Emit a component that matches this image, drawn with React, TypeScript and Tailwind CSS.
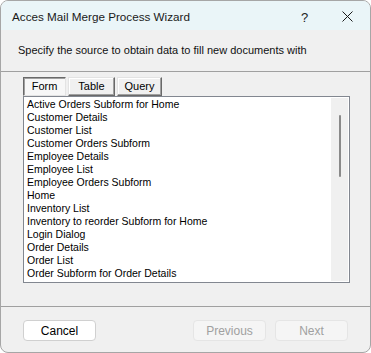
import React from "react";

const items = [
  "Active Orders Subform for Home",
  "Customer Details",
  "Customer List",
  "Customer Orders Subform",
  "Employee Details",
  "Employee List",
  "Employee Orders Subform",
  "Home",
  "Inventory List",
  "Inventory to reorder Subform for Home",
  "Login Dialog",
  "Order Details",
  "Order List",
  "Order Subform for Order Details",
];

export default function App() {
  return (
    <div className="w-[371px] h-[353px] bg-white">
      <div
        className="w-[371px] h-[353px] flex flex-col border border-[#a6a6a6] rounded-[8px] overflow-hidden bg-[#f0f0f0] text-black"
        style={{ fontFamily: '"Liberation Sans", Arial, sans-serif' }}
      >
        {/* title bar */}
        <div className="h-[29px] shrink-0 bg-[#eaf5f8] flex items-center pl-[11px] pt-[3px] relative">
          <span className="text-[11.7px] text-[#1a1a1a]">Acces Mail Merge Process Wizard</span>
          <span className="absolute left-[300px] top-[7px] text-[13px] text-[#222]">?</span>
          <svg className="absolute left-[341px] top-[10px]" width="11" height="11" viewBox="0 0 11 11">
            <path d="M0.5 0.5 L10.5 10.5 M10.5 0.5 L0.5 10.5" stroke="#1a1a1a" strokeWidth="1" />
          </svg>
        </div>
        {/* header */}
        <div className="h-[42px] shrink-0 border-b border-[#a0a0a0] pl-[17px] pt-[7px]">
          <span className="text-[11px] text-[#111]">Specify the source to obtain data to fill new documents with</span>
        </div>
        {/* content */}
        <div className="h-[235px] shrink-0 border-b border-[#a0a0a0] pl-[22px] pt-[5px]">
          <div className="flex gap-[2px] h-[19px]">
            <div className="w-[43px] h-[19px] flex items-center justify-center text-[11px] bg-[#f7f7f7] border border-t-[#696969] border-l-[#696969] border-r-[#e3e3e3] border-b-[#e3e3e3] shadow-[inset_1px_1px_0_#a0a0a0]">
              Form
            </div>
            <div className="w-[47px] h-[19px] flex items-center justify-center text-[11px] bg-[#f0f0f0] border border-t-[#e3e3e3] border-l-[#e3e3e3] border-r-[#696969] border-b-[#696969] shadow-[inset_-1px_-1px_0_#a0a0a0,inset_1px_1px_0_#ffffff]">
              Table
            </div>
            <div className="w-[45px] h-[19px] flex items-center justify-center text-[11px] bg-[#f0f0f0] border border-t-[#e3e3e3] border-l-[#e3e3e3] border-r-[#696969] border-b-[#696969] shadow-[inset_-1px_-1px_0_#a0a0a0,inset_1px_1px_0_#ffffff]">
              Query
            </div>
          </div>
          <div className="w-[327px] h-[187px] border border-[#828790] bg-white flex">
            <div className="flex-1 pt-[1px] pl-[3px]">
              {items.map((t) => (
                <div key={t} className="h-[13px] leading-[13px] text-[10.5px] text-[#000] whitespace-nowrap">
                  {t}
                </div>
              ))}
            </div>
            <div className="w-[17px] bg-[#f0f0f0] mt-[1px] mb-[1px] mr-[1px] flex justify-center pt-[17px]">
              <div className="w-[2px] h-[62px] bg-[#8a8a8a] rounded-full" />
            </div>
          </div>
        </div>
        {/* footer */}
        <div className="flex-1 relative">
          <button className="absolute left-[22px] top-[13px] w-[73px] h-[21px] bg-white border border-[#d0d0d0] rounded-[4px] text-[12px] text-black flex items-center justify-center">
            Cancel
          </button>
          <button className="absolute left-[192px] top-[13px] w-[73px] h-[21px] bg-[#f5f5f5] border border-[#e5e5e5] rounded-[4px] text-[12px] text-[#a0a0a0] flex items-center justify-center">
            Previous
          </button>
          <button className="absolute left-[274px] top-[13px] w-[73px] h-[21px] bg-[#f5f5f5] border border-[#e5e5e5] rounded-[4px] text-[12px] text-[#a0a0a0] flex items-center justify-center">
            Next
          </button>
        </div>
      </div>
    </div>
  );
}
